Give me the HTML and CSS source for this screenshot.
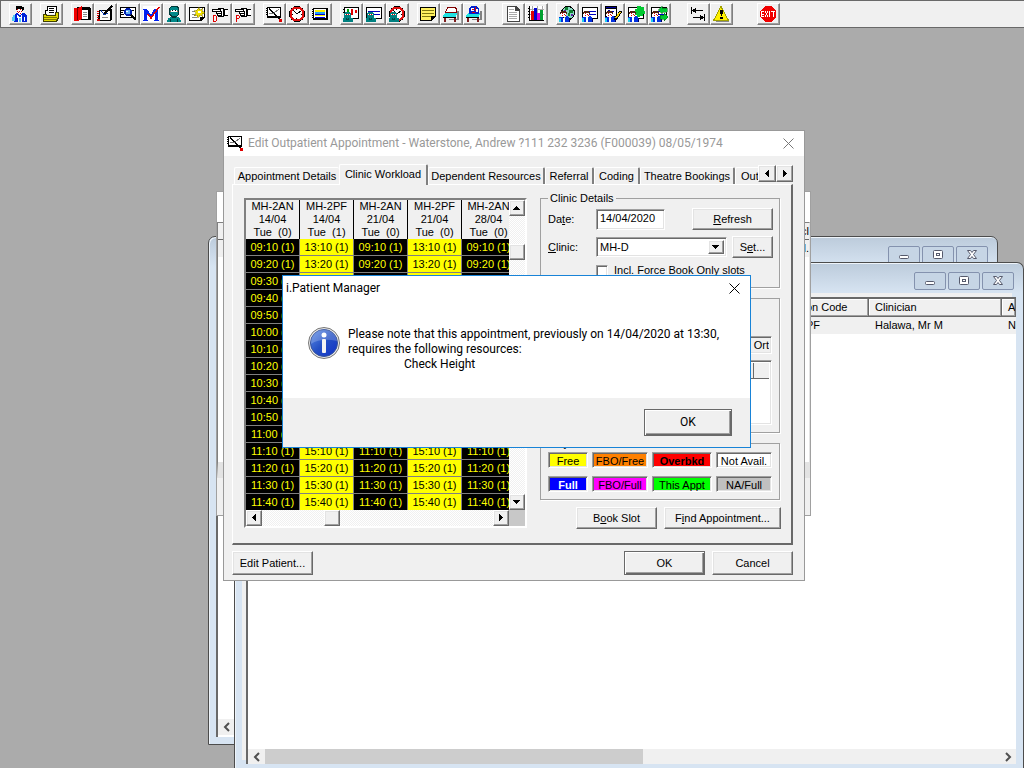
FILE: index.html
```html
<!DOCTYPE html>
<html lang="en">
<head>
    <meta charset="UTF-8">
    <meta name="viewport" content="width=device-width, initial-scale=1.0">
    <title>i.Patient Manager</title>
    <link rel="stylesheet" href="styles.css">
</head>
<body>
    <!-- shared arrow shapes -->
    <svg class="defs" width="0" height="0">
        <symbol id="left" viewBox="0 0 8 8"><path d="M5 0h1v7h-1zM4 1h1v5h-1zM3 2h1v3h-1zM2 3h1v1h-1z"/></symbol>
        <symbol id="right" viewBox="0 0 8 8"><path d="M2 0h1v7h-1zM3 1h1v5h-1zM4 2h1v3h-1zM5 3h1v1h-1z"/></symbol>
        <symbol id="up" viewBox="0 0 8 8"><path d="M0 5h7v1h-7zM1 4h5v1h-5zM2 3h3v1h-3zM3 2h1v1h-1z"/></symbol>
        <symbol id="down" viewBox="0 0 8 8"><path d="M0 2h7v1h-7zM1 3h5v1h-5zM2 4h3v1h-3zM3 5h1v1h-1z"/></symbol>
        <symbol id="appt" viewBox="0 0 16 16">
            <path fill="#000" d="M1 1h14v11h-14z"/><path fill="#fff" d="M2 2h12v8h-12z"/>
            <path fill="#000" d="M0 2h1v1h-1zM0 4h1v1h-1zM0 6h1v1h-1zM0 8h1v1h-1z"/>
            <path stroke="#000" stroke-width="1.5" fill="none" d="M3 3L14 13"/>
            <path stroke="#777" d="M3 8L8 7L13 3" fill="none"/>
            <path fill="#e00000" d="M13 13h3v3h-3z"/>
        </symbol>
        <symbol id="doctor" viewBox="0 0 16 16">
            <path fill="#502010" d="M2 5h5v1h1v2h-7v-2h1z"/><path fill="#fff" d="M2 7h5v4h-5z"/>
            <path fill="#e00000" d="M3 7h1v1h-1zM5 8h1v1h-1zM3 9h1v1h-1zM6 9h1v1h-1z"/>
            <path fill="#0030e0" d="M0 11h3l2 1 3-2 2 2v4h-10z"/><path fill="#20d0f0" d="M0 12h2v4h-2z"/><path fill="#fff" d="M4 12h2v4h-2z"/><path fill="#000060" d="M10 12h1v4h-1z"/>
        </symbol>
        <symbol id="surgeon" viewBox="0 0 16 16">
            <path fill="#008080" d="M2 6h5v1h1v5h2v4h-11v-4h2v-5h1z"/><path fill="#fff" d="M2 8h5v1h-5z"/><path fill="#e00000" d="M3 8h1v1h-1zM5 8h1v1h-1z"/><path fill="#004848" d="M3 12h1v1h1v-1h1v2h-3z"/>
        </symbol>
        <symbol id="clock" viewBox="0 0 16 16">
            <circle cx="8" cy="8" r="8" fill="#000"/><circle cx="8" cy="8" r="7.500" fill="#e01010"/><circle cx="8" cy="8" r="5.500" fill="#fff"/>
            <path fill="none" stroke="#000" d="M4 4L8 8L12 5"/><path fill="#000" d="M7 3h1v1h-1zM7 12h1v1h-1zM3 8h1v1h-1zM12 8h1v1h-1z"/>
        </symbol>
        <symbol id="hand" viewBox="0 0 16 16">
            <path fill="#000" d="M0 3h6v-1h6v1h4v7h-4v1h-6v-1h-1v-2h-1v-2h-4z"/><path fill="#fff" d="M1 4h7v1h-7zM5 6h4v1h-4zM6 8h3v1h-3zM9 3h2v2h-2zM10 5h1v5h-1zM13 4h3v5h-3z"/>
        </symbol>
        <symbol id="sheet" viewBox="0 0 16 16">
            <path fill="#000" d="M0 1h16v12h-16z"/><path fill="#fff" d="M1 2h14v10h-14z"/><path fill="#0000c0" d="M2 5h12v1h-12zM7 8h7v1h-7z"/>
        </symbol>
        <symbol id="couch" viewBox="0 0 16 16">
            <path fill="#808080" d="M14 5h2v9h-2zM6 13h10v1h-10z"/><path fill="#20e0e0" d="M2 7h12l-1 4h-13v-2z"/><path fill="#000" d="M0 11h13v1h-13z"/><path fill="#802020" d="M1 12h2v4h-2zM11 12h2v4h-2z"/>
        </symbol>
    </svg>

    <nav class="toolbar" aria-label="Toolbar">
        <div class="group">
            <button aria-label="Patient"><svg viewBox="0 0 16 16"><path fill="#000" d="M4 0h6v1h2v3h-1v1h-6v-1h-1z"/><path fill="#fff" d="M5 3h5v5h-5z"/><path fill="#e00000" d="M5 3h1v1h-1zM8 3h1v1h-1zM7 5h1v1h-1zM5 5h1v1h-1zM9 5h1v1h-1zM6 6h1v1h-1zM8 7h1v1h-1z"/><path fill="#0020d8" d="M2 9l3-2 3 3 2-3h2l3 3v6h-13z"/><path fill="#fff" d="M5 8l3 4 2-4v8h-4zM12 11h1v4h-1z"/><path fill="#50c8f8" d="M1 9h2v6h-3v-4h1zM7 12h2v4h-2z"/></svg></button>
        </div>
        <div class="group">
            <button aria-label="Open list"><svg viewBox="0 0 16 16"><path fill="#000" d="M4 0h10v8h-12v-4h2z"/><path fill="#fff" d="M5 1h8v7h-10v-3h2z"/><path fill="#000" d="M6 2h5v1h-5zM6 4h5v1h-5zM6 6h5v1h-5z"/><path fill="#e0d800" stroke="#404000" d="M.5 8.500h3v1h9v-3h3v5l-2 4h-13z"/><path fill="#807800" d="M1 11h13v1h-13zM1 13h13v1h-13z"/></svg></button>
        </div>
        <div class="group">
            <button aria-label="Record"><svg viewBox="0 0 16 16"><path fill="#000" d="M3 1h12l2 2v11h-14z"/><path fill="#fff" d="M8 4h6v9h-6z"/><path fill="#888" d="M9 6h4v1h-4zM9 8h4v1h-4zM9 10h4v1h-4z"/><path fill="#f00000" d="M0 2h4l4-2v13l-4 2h-4z"/><path fill="#700" d="M3 2h1v12h-1z"/></svg></button>
            <button aria-label="Edit record"><svg viewBox="0 0 16 16"><path fill="#000" d="M2 4h10v-1h3v11l-2 1h-12z"/><path fill="#fff" d="M3 5h10v9h-10z"/><path fill="#d00000" d="M0 5h2v1h-2zM0 7h2v1h-2zM0 9h2v1h-2zM0 11h2v1h-2zM0 13h3v2h-3z"/><path stroke="#000" stroke-width="1.5" d="M15 0L7 8"/><path stroke="#0030a0" d="M4 4L7 9L11 7" fill="none"/><path fill="#888" d="M5 11h6v1h-6z"/></svg></button>
            <button aria-label="Find record"><svg viewBox="0 0 16 16"><path fill="#000" d="M0 1h16v11h-16z"/><path fill="#fff" d="M1 2h14v9h-14z"/><path fill="#000" d="M1 4h3v1h-3zM1 6h2v1h-2zM1 8h3v1h-3zM12 4h2v1h-2z"/><circle cx="8" cy="6" r="4" fill="#0020b0"/><circle cx="8" cy="6" r="2.500" fill="#60b0f8"/><path fill="#fff" d="M6 5h2v1h-2z"/><path stroke="#000" stroke-width="2" d="M11 9L16 14"/></svg></button>
            <button aria-label="Mark"><svg viewBox="0 0 16 16"><path fill="#fff" d="M0 0h16v16h-16z"/><path fill="#0020f0" d="M0 3h4l4 6 3-6h4v11h1v1h-5v-1h1v-7l-4 5-4-5v7h1v1h-5v-1h1v-10h-1z"/><path fill="none" stroke="#e00000" stroke-width="1.500" d="M5 8L8 12L16 1"/></svg></button>
            <button aria-label="Theatre"><svg viewBox="0 0 16 16"><path fill="#003838" d="M5 0h6l2 2v6l-2 3h-6l-2-3v-6z"/><path fill="#008888" d="M5 1h6l1 2v5l-2 2h-4l-2-2v-5z"/><path fill="#fff" d="M5 4h6v2h-6z"/><path fill="#000" d="M6 4h1v1h-1zM9 4h1v1h-1z"/><path fill="#c06040" d="M4 5h1v1h-1zM11 5h1v1h-1z"/><path fill="#008888" d="M2 12l3-1h6l3 1 1 4h-14z"/><path fill="#003838" d="M4 13h1v3h-1zM11 13h1v3h-1zM6 11h4v1h-4z"/></svg></button>
            <button aria-label="New letter"><svg viewBox="0 0 16 16"><path fill="#000" d="M0 1h16v10l-4 4h-12z"/><path fill="#fff" d="M1 2h14v9h-4v3h-10z"/><path fill="#888" d="M3 5h3v1h-3zM3 8h3v1h-3zM3 11h5v1h-5z"/><path fill="#f0e000" stroke="#807000" stroke-width=".5" d="M10 1l1 3 3-2-1 3 3 2-3 1 1 3-3-2-2 3-1-3-3 1 2-3-2-2 3-1z"/><path fill="#fff" d="M9 5h3v2h-3z"/></svg></button>
            <button aria-label="Doctor pointer"><svg viewBox="0 0 16 16"><use href="#hand"/><path fill="none" stroke="#e00000" d="M1.500 9.500h2l1 1v4l-1 1h-2z"/></svg></button>
            <button aria-label="Patient pointer"><svg viewBox="0 0 16 16"><use href="#hand"/><path fill="none" stroke="#e00000" d="M1.500 16v-6.500h2l1 1v1l-1 1h-2"/></svg></button>
        </div>
        <div class="group">
            <button aria-label="Appointment"><svg viewBox="0 0 16 16"><use href="#appt"/></svg></button>
            <button aria-label="Time"><svg viewBox="0 0 16 16"><use href="#clock"/></svg></button>
            <button aria-label="Schedule"><svg viewBox="0 0 16 16"><path fill="#000" d="M1 2h15v12h-15z"/><path fill="#fff" d="M2 3h12v9h-12z"/><path fill="#f8f000" d="M3 4h10v2h-10zM3 9h10v1h-10z"/><path fill="#20a0ff" d="M3 6h10v2h-10z"/><path fill="#0000d0" d="M3 8h10v1h-10zM3 11h10v1h-10z"/><path fill="#000" d="M0 3h1v1h-1zM0 5h1v1h-1zM0 7h1v1h-1zM0 9h1v1h-1zM0 11h1v1h-1z"/></svg></button>
        </div>
        <div class="group">
            <button aria-label="Theatre list"><svg viewBox="0 0 16 16"><path fill="#000" d="M1 1h15v12h-15z"/><path fill="#fff" d="M2 2h13v10h-13z"/><path fill="#00a000" d="M4 3h2v3h-2z"/><path fill="#e00000" d="M8 3h2v6h-2zM12 4h2v3h-2z"/><path fill="#000" d="M0 3h1v1h-1zM0 6h1v1h-1z"/><use href="#surgeon"/></svg></button>
            <button aria-label="Theatre notes"><svg viewBox="0 0 16 16"><use href="#sheet"/><use href="#surgeon"/></svg></button>
            <button aria-label="Theatre time"><svg viewBox="0 0 16 16"><use href="#clock"/><use href="#surgeon"/></svg></button>
        </div>
        <div class="group">
            <button aria-label="Note"><svg viewBox="0 0 16 16"><path fill="#000" d="M0 1h16v9l-4 5h-12z"/><path fill="#fff060" d="M1 2h14v8h-4v4h-10z"/><path fill="#807810" d="M2 4h12v1h-12zM2 7h12v1h-12zM2 10h9v1h-9z"/></svg></button>
            <button aria-label="Bed"><svg viewBox="0 0 16 16"><use href="#couch"/><path fill="#fff" stroke="#800000" d="M4.500 1.500h8l1 2v3h-11z"/></svg></button>
            <button aria-label="Bed patient"><svg viewBox="0 0 16 16"><use href="#couch"/><path fill="#0020d0" d="M5 0h5l3 3v5h-10v-5z"/><path fill="#fff" d="M5 2h3v3h-3zM10 3h2v3h-2z"/><path fill="#e00000" d="M6 3h2v1h-2zM9 1h1v4h-1zM6 6h3v1h-3z"/></svg></button>
        </div>
        <div class="group wide">
            <button aria-label="Document"><svg viewBox="0 0 16 16"><path fill="#444" d="M2 0h9l4 4v12h-13z"/><path fill="#fff" d="M3 1h7v4h4v10h-11z"/><path fill="#aaa" d="M4 3h5v1h-5zM4 6h8v1h-8zM4 8h8v1h-8zM4 10h8v1h-8zM4 12h8v1h-8z"/></svg></button>
            <button aria-label="Chart"><svg viewBox="0 0 16 16"><path fill="#fff" d="M1 0h15v15h-15z"/><path fill="#aaa" d="M4 0h1v15h-1zM9 0h1v15h-1zM14 0h1v15h-1zM1 3h15v1h-15zM1 8h15v1h-15z"/><path fill="#000" d="M1 0h1v14h14v1h-15zM0 2h1v1h-1zM0 5h1v1h-1zM0 8h1v1h-1zM0 11h1v1h-1z"/><path fill="#e00000" d="M3 5h3v9h-3z"/><path fill="#0000d0" d="M6 2h3v12h-3z"/><path fill="#d000d0" d="M9 7h3v7h-3z"/><path fill="#00a030" d="M12 4h3v10h-3z"/></svg></button>
        </div>
        <div class="group">
            <button aria-label="Global patient"><svg viewBox="0 0 16 16"><circle cx="9" cy="7" r="7" fill="#000"/><circle cx="9" cy="7" r="6" fill="#88d8c0"/><path fill="#108030" d="M6 1h3v3h-3zM10 4h4v3h-3v3h-2v-3h1z"/><path fill="#6020a0" d="M5 4h2v2h-2zM12 8h2v2h-2z"/><use href="#doctor"/></svg></button>
            <button aria-label="Patient sheet"><svg viewBox="0 0 16 16"><use href="#sheet"/><use href="#doctor"/></svg></button>
            <button aria-label="Edit patient sheet"><svg viewBox="0 0 16 16"><path fill="#000" d="M0 0h12v11h-12z"/><path fill="#fff" d="M1 3h10v7h-10z"/><path fill="#0000a0" d="M1 1h10v1h-10zM3 4h2v1h-2zM7 5h2v1h-2z"/><use href="#doctor"/><path stroke="#000" stroke-width="3" d="M16 5L10 14"/><path stroke="#f0d000" stroke-width="1.500" d="M15 6L11 12"/></svg></button>
            <button aria-label="Patient location"><svg viewBox="0 0 16 16"><use href="#sheet"/><path fill="#00c830" d="M9 0h4v1h3v4h1v3h-2v2h-3v1h-3v-2h-2v-6h2z"/><use href="#doctor"/></svg></button>
            <button aria-label="Transfer patient"><svg viewBox="0 0 16 16"><use href="#sheet"/><use href="#doctor"/><path fill="#00c830" stroke="#006010" stroke-width=".5" d="M7 4l4-4v2h5v4h-5v2zM17 11l-4-4v2h-4v4h4v2z"/></svg></button>
        </div>
        <div class="group wide">
            <button aria-label="Tab order"><svg viewBox="0 0 16 16"><path fill="#000" d="M1 1h1v7h-1zM2 4h11v1h-11zM3 3h2v3h-2zM5 2h1v5h-1zM14 8h1v7h-1zM3 11h11v1h-11zM11 10h2v3h-2zM10 9h1v5h-1z"/></svg></button>
            <button aria-label="Alert"><svg viewBox="0 0 16 16"><path fill="#fff000" stroke="#a0a000" d="M8 .5L15.500 14.500H.5z"/><path fill="#888" d="M3 15h13v1h-13z"/><path fill="#000" d="M7 4h3v4h-1v2h-1v-2h-1zM7 11h3v2h-3z"/></svg></button>
        </div>
        <div class="group last">
            <button aria-label="Exit"><svg viewBox="0 0 16 16"><path fill="#f00000" d="M5 0h6l5 5v6l-5 5h-6l-5-5v-6z"/><path fill="#fff" d="M1 5h3v1h-2v2h2v1h-2v1h2v1h-3zM5 5h1v2h1v-2h1v2h-1v2h1v2h-1v-2h-1v2h-1v-2h1v-2h-1zM9 5h1v6h-1zM11 5h4v1h-1v5h-1v-5h-2z"/></svg></button>
        </div>
    </nav>

    <main class="desktop">
        <!-- back MDI window -->
        <section class="mdi mdi-back">
            <div class="mdi-title">
                <button aria-label="Minimise"><svg viewBox="0 0 12 10"><rect x="1.500" y="5.500" width="9" height="3" rx="1"/></svg></button>
                <button aria-label="Restore"><svg viewBox="0 0 12 10"><rect x="1.500" y=".5" width="9" height="8" rx="1"/><rect x="4.500" y="3.500" width="3" height="2"/></svg></button>
                <button aria-label="Close"><svg viewBox="0 0 12 10"><path d="M1.500 .5h3l1.500 2 1.500-2h3L7.500 4.500l3 4h-3L6 6.500l-1.500 2h-3l3-4z"/></svg></button>
            </div>
            <div class="mdi-body">
                <div class="hscroll"><button class="flat" aria-label="Scroll left"><svg viewBox="0 0 8 10"><path d="M6 1L2 5l4 4"/></svg></button></div>
            </div>
        </section>

        <!-- front MDI window -->
        <section class="mdi mdi-front">
            <div class="mdi-title">
                <button aria-label="Minimise"><svg viewBox="0 0 12 10"><rect x="1.500" y="5.500" width="9" height="3" rx="1"/></svg></button>
                <button aria-label="Restore"><svg viewBox="0 0 12 10"><rect x="1.500" y=".5" width="9" height="8" rx="1"/><rect x="4.500" y="3.500" width="3" height="2"/></svg></button>
                <button aria-label="Close"><svg viewBox="0 0 12 10"><path d="M1.500 .5h3l1.500 2 1.500-2h3L7.500 4.500l3 4h-3L6 6.500l-1.500 2h-3l3-4z"/></svg></button>
            </div>
            <div class="mdi-body">
                <table class="list">
                    <colgroup><col class="c-first"><col class="c-code"><col class="c-clinician"><col></colgroup>
                    <thead><tr><th></th><th>Session Code</th><th>Clinician</th><th>A</th></tr></thead>
                    <tbody><tr><td></td><td>MH-2PF</td><td>Halawa, Mr M</td><td>N</td></tr></tbody>
                </table>
                <div class="hscroll">
                    <button class="flat" aria-label="Scroll left"><svg viewBox="0 0 8 10"><path d="M6 1L2 5l4 4"/></svg></button>
                    <span class="flat-thumb"></span>
                    <button class="flat" aria-label="Scroll right"><svg viewBox="0 0 8 10"><path d="M2 1l4 4-4 4"/></svg></button>
                </div>
            </div>
        </section>

        <section class="browser">
            <div class="browser-list">
                <div class="browser-head">cl</div>
                <div class="browser-row">l.</div>
            </div>
            <div class="browser-foot"></div>
        </section>

        <!-- appointment dialog -->
        <section class="dialog">
            <header class="dialog-title">
                <svg viewBox="0 0 16 16"><use href="#appt"/></svg>
                <h1>Edit Outpatient Appointment - Waterstone, Andrew ?111 232 3236 (F000039) 08/05/1974</h1>
                <button class="close" aria-label="Close"><svg viewBox="0 0 11 11"><path d="M.5 .5l10 10M10.500 .5l-10 10"/></svg></button>
            </header>
            <div class="dialog-body">
                <div class="tabs">
                    <button class="tab t-details">Appointment Details</button>
                    <button class="tab t-workload active">Clinic Workload</button>
                    <button class="tab t-resources">Dependent Resources</button>
                    <button class="tab t-referral">Referral</button>
                    <button class="tab t-coding">Coding</button>
                    <button class="tab t-theatre">Theatre Bookings</button>
                    <button class="tab t-out">Out</button>
                    <div class="spin">
                        <button class="raised" aria-label="Previous tabs"><svg class="arrow"><use href="#left"/></svg></button>
                        <button class="raised" aria-label="Next tabs"><svg class="arrow"><use href="#right"/></svg></button>
                    </div>
                </div>
                <div class="panel">
                    <div class="workload">
                        <div class="slots">
                            <table>
                                <thead>
                                    <tr>
                                        <th>MH-2AN<br>14/04<br>Tue&nbsp; (0)</th>
                                        <th>MH-2PF<br>14/04<br>Tue&nbsp; (1)</th>
                                        <th>MH-2AN<br>21/04<br>Tue&nbsp; (0)</th>
                                        <th>MH-2PF<br>21/04<br>Tue&nbsp; (0)</th>
                                        <th>MH-2AN<br>28/04<br>Tue&nbsp; (0)</th>
                                    </tr>
                                </thead>
                                <tbody id="slotRows"></tbody>
                            </table>
                        </div>
                        <div class="track vertical">
                            <button class="raised" aria-label="Scroll up"><svg class="arrow"><use href="#up"/></svg></button>
                            <span class="raised thumb"></span>
                            <button class="raised end" aria-label="Scroll down"><svg class="arrow"><use href="#down"/></svg></button>
                        </div>
                        <div class="track horizontal">
                            <button class="raised" aria-label="Scroll left"><svg class="arrow"><use href="#left"/></svg></button>
                            <span class="raised thumb"></span>
                            <button class="raised end" aria-label="Scroll right"><svg class="arrow"><use href="#right"/></svg></button>
                        </div>
                        <div class="corner"></div>
                    </div>

                    <div class="side">
                        <fieldset class="details">
                            <legend>Clinic Details</legend>
                            <div class="row">
                                <label for="date">Da<u>t</u>e:</label>
                                <input type="text" id="date" class="sunken" value="14/04/2020">
                                <button class="raised btn refresh"><u>R</u>efresh</button>
                            </div>
                            <div class="row">
                                <label for="clinic"><u>C</u>linic:</label>
                                <div class="combo sunken">
                                    <select id="clinic"><option>MH-D</option></select>
                                    <span class="raised drop"><svg class="arrow"><use href="#down"/></svg></span>
                                </div>
                                <button class="raised btn set">S<u>e</u>t...</button>
                            </div>
                            <div class="row check">
                                <input type="checkbox" id="force" class="sunken">
                                <label for="force">Incl. Force Book Only slots</label>
                            </div>
                        </fieldset>
                        <fieldset class="session">
                            <input type="text" class="sunken" value=", Ort" aria-label="Specialty" readonly>
                            <div class="sunken minilist"><div><span></span><span></span></div></div>
                        </fieldset>
                        <fieldset class="key">
                            <legend>Key</legend>
                            <div class="keys">
                                <span class="sunken k-free">Free</span>
                                <span class="sunken k-fbo">FBO/Free</span>
                                <span class="sunken k-over">Overbkd</span>
                                <span class="sunken k-not">Not Avail.</span>
                                <span class="sunken k-full">Full</span>
                                <span class="sunken k-fbofull">FBO/Full</span>
                                <span class="sunken k-this">This Appt</span>
                                <span class="sunken k-na">NA/Full</span>
                            </div>
                        </fieldset>
                        <div class="actions">
                            <button class="raised btn">B<u>o</u>ok Slot</button>
                            <button class="raised btn find">F<u>i</u>nd Appointment...</button>
                        </div>
                    </div>
                </div>
                <footer class="dialog-foot">
                    <button class="raised btn">Edit Patient...</button>
                    <button class="raised btn default">OK</button>
                    <button class="raised btn">Cancel</button>
                </footer>
            </div>
        </section>

        <!-- message box -->
        <section class="message" role="alertdialog">
            <header class="message-title">
                <h2>i.Patient Manager</h2>
                <button class="close" aria-label="Close"><svg viewBox="0 0 11 11"><path d="M.5 .5l10 10M10.500 .5l-10 10"/></svg></button>
            </header>
            <div class="message-body">
                <svg class="info" viewBox="0 0 32 32">
                    <defs><linearGradient id="blue" x1="0" y1="0" x2="1" y2="1"><stop offset="0" stop-color="#5f8fe8"/><stop offset=".5" stop-color="#2450c4"/><stop offset="1" stop-color="#1030c8"/></linearGradient></defs>
                    <circle cx="16" cy="16" r="15.500" fill="#e8e8e8" stroke="#777"/>
                    <circle cx="16" cy="16" r="13.500" fill="url(#blue)" stroke="#34529c"/>
                    <path fill="#fff" fill-opacity=".2" d="M3 17a13 13 0 0 1 26-3C20 12 10 12 3 17z"/>
                    <circle cx="16" cy="8" r="2.500" fill="#fff"/><rect x="14" y="12" width="4" height="14" rx="1" fill="#f4f4f4"/>
                </svg>
                <div class="text">
                    <p>Please note that this appointment, previously on 14/04/2020 at 13:30,</p>
                    <p>requires the following resources:</p>
                    <p class="item">Check Height</p>
                </div>
            </div>
            <footer class="message-foot"><button class="raised btn default">OK</button></footer>
        </section>
    </main>

    <script>
    // one row for each ten minute slot, AN clinics in the morning, PF in the afternoon
    var rows = '';
    for (var i = 1; i <= 16; i++) {
        var hour = Math.floor(i / 6);
        var min = (i % 6) + '0';
        var an = ('0' + (9 + hour)).slice(-2) + ':' + min + ' (1)';
        var pf = (13 + hour) + ':' + min + ' (1)';
        rows += '<tr>';
        for (var c = 0; c < 5; c++) {
            rows += c % 2 ? '<td class="pf">' + pf + '</td>' : '<td>' + an + '</td>';
        }
        rows += '</tr>';
    }
    document.getElementById('slotRows').innerHTML = rows;
    </script>
</body>
</html>
```

FILE: styles.css
```css
* {
    box-sizing: border-box;
}

body {
    margin: 0;
    height: 100vh;
    display: flex;
    flex-direction: column;
    overflow: hidden;
    background-color: #ababab;
    color: #000;
    font-family: "Liberation Sans", Arial, sans-serif;
    font-size: 11px;
    line-height: 13px;
}

button, input, select {
    font: inherit;
    color: inherit;
    margin: 0;
    padding: 0;
    border-radius: 0;
}

button {
    border: 0;
    background: none;
    white-space: nowrap;
}

h1, h2, p {
    margin: 0;
    font-size: 12px;
    font-weight: normal;
}

.defs {
    position: absolute;
}

/* 3D edges */
.raised {
    background-color: #f0f0f0;
    border: 1px solid;
    border-color: #fff #696969 #696969 #fff;
    box-shadow: inset -1px -1px 0 #a0a0a0, inset 1px 1px 0 #e3e3e3;
}

.sunken {
    border: 1px solid;
    border-color: #a0a0a0 #fff #fff #a0a0a0;
    box-shadow: inset 1px 1px 0 #696969, inset -1px -1px 0 #e3e3e3;
}

.btn {
    height: 22px;
    width: 81px;
}

.btn.default {
    border-color: #696969;
    box-shadow: inset 1px 1px 0 #fff, inset -1px -1px 0 #696969, inset -2px -2px 0 #a0a0a0;
}

.arrow {
    display: block;
    width: 8px;
    height: 8px;
    margin: auto;
    shape-rendering: crispEdges;
}

/* toolbar */
.toolbar {
    display: flex;
    gap: 8px;
    height: 28px;
    padding: 2px 8px;
    background-color: #f0f0f0;
    border: 1px solid #696969;
    border-width: 1px 0 1px 1px;
}

.group {
    display: flex;
}

.group.wide {
    margin-left: 8px;
}

.group.last {
    margin-left: 16px;
}

.toolbar button {
    width: 23px;
    height: 22px;
    padding: 2px;
    background-color: #f0f0f0;
    border: 1px solid;
    border-color: #fff #808080 #808080 #fff;
    box-shadow: inset -1px -1px 0 #a0a0a0;
}

.toolbar svg {
    display: block;
    width: 16px;
    height: 16px;
    overflow: visible;
    shape-rendering: crispEdges;
}

.desktop {
    position: relative;
    flex: 1;
    overflow: hidden;
}

/* MDI child windows */
.mdi {
    position: absolute;
    display: flex;
    flex-direction: column;
    padding: 0 7px 7px;
    background: #d7e4f2 linear-gradient(#bccbdb, #d7e4f2) no-repeat 0 0 / 100% 30px;
    border: 1px solid #4c4c4c;
    border-radius: 7px 7px 0 0;
    box-shadow: inset 1px 1px 0 #eef4fa;
}

.mdi-back {
    left: 208px;
    top: 208px;
    width: 790px;
    height: 509px;
}

.mdi-front {
    left: 234px;
    right: 0;
    top: 234px;
    bottom: 0;
    padding-bottom: 4px;
    border-bottom: 0;
}

.mdi-title {
    display: flex;
    justify-content: flex-end;
    gap: 2px;
    height: 30px;
    padding: 9px 2px 0 0;
}

.mdi-title button {
    width: 32px;
    height: 18px;
    border: 1px solid #8492ae;
    border-radius: 2px;
    background-color: #c6d5e5;
}

.mdi-title svg {
    display: block;
    width: 12px;
    height: 10px;
    margin: auto;
    fill: #fff;
    stroke: #565a6c;
}

.mdi-body {
    flex: 1;
    display: flex;
    flex-direction: column;
    justify-content: space-between;
    background-color: #fff;
    border-left: 2px solid #696969;
}

.mdi-back .mdi-body {
    justify-content: flex-end;
    padding-bottom: 2px;
}

.mdi-front .mdi-body {
    border-top: 2px solid #696969;
    margin-top: 4px;
    margin-left: 4px;
    box-shadow: -4px -4px 0 #f0f0f0;
}

.list {
    width: 100%;
    table-layout: fixed;
    border-collapse: separate;
    border-spacing: 0;
    white-space: nowrap;
    background-color: #f0f0f0;
}

.c-first {
    width: 525px;
}

.c-code {
    width: 96px;
}

.c-clinician {
    width: 133px;
}

.list th, .list td {
    height: 17px;
    padding: 0 0 0 6px;
    font-weight: normal;
    text-align: left;
    overflow: hidden;
}

.list th {
    height: 18px;
    border-right: 1px solid #696969;
    border-bottom: 1px solid #696969;
    box-shadow: inset -1px -1px 0 #a0a0a0, inset 1px 1px 0 #fff;
}

.hscroll {
    display: flex;
    height: 16px;
    background-color: #f0f0f0;
}

.mdi-front .hscroll {
    height: 15px;
}

.flat {
    width: 17px;
}

.flat:last-child:not(:first-child) {
    margin-left: auto;
}

.flat svg {
    display: block;
    width: 8px;
    height: 10px;
    margin: auto;
    fill: none;
    stroke: #505050;
    stroke-width: 2;
}

.flat-thumb {
    width: 378px;
    background-color: #cdcdcd;
}

/* window behind the dialog */
.browser {
    position: absolute;
    left: 216px;
    top: 163px;
    width: 595px;
    height: 325px;
    display: flex;
    flex-direction: column;
    background-color: #fff;
    border: 1px solid #a0a0a0;
    padding-top: 30px;
}

.browser-list {
    flex: 1;
    border: 1px solid #808080;
    border-bottom: 16px solid #e3e3e3;
    border-right-color: #e3e3e3;
    text-align: right;
}

.browser-head, .browser-row {
    height: 17px;
    line-height: 17px;
    background-color: #f0f0f0;
}

.browser-head {
    border-bottom: 1px solid #696969;
}

.browser-foot {
    height: 37px;
    background-color: #f0f0f0;
}

/* appointment dialog */
.dialog {
    position: absolute;
    left: 223px;
    top: 102px;
    width: 582px;
    background-color: #f0f0f0;
    border: 1px solid #999;
}

.dialog-title {
    display: flex;
    align-items: center;
    height: 25px;
    padding: 0 10px 1px 3px;
    background-color: #fff;
}

.dialog-title > svg {
    width: 16px;
    height: 16px;
    margin-right: 5px;
    shape-rendering: crispEdges;
}

.dialog-title h1 {
    flex: 1;
    color: #999;
    font-family: Roboto, "Open Sans", sans-serif;
    white-space: nowrap;
}

.close svg {
    display: block;
    width: 11px;
    height: 11px;
    fill: none;
    stroke: #000;
}

.dialog .close svg {
    stroke: #777;
}

.dialog-body {
    padding: 8px 11px 5px 8px;
}

.tabs {
    position: relative;
    display: flex;
    align-items: flex-end;
    height: 20px;
    padding-left: 2px;
}

.tab {
    height: 17px;
    border: 1px solid #fff;
    border-right: 2px solid #808080;
    border-bottom: 0;
    border-radius: 2px 2px 0 0;
    background-color: #f0f0f0;
}

.tab.active {
    height: 21px;
    padding-bottom: 1px;
    margin-bottom: -1px;
    z-index: 1;
}

.t-details {
    width: 105px;
    border-right-width: 0;
}

.t-workload {
    width: 89px;
}

.t-resources {
    width: 117px;
}

.t-referral {
    width: 49px;
}

.t-coding {
    width: 46px;
}

.t-theatre {
    width: 95px;
}

.t-out {
    flex: 1;
    padding-left: 5px;
    text-align: left;
    border-right: 0;
}

.spin {
    position: absolute;
    right: 0;
    top: 1px;
    display: flex;
    height: 17px;
}

.spin .raised {
    width: 17px;
}

.spin .raised:first-child {
    width: 18px;
}

.panel {
    display: flex;
    justify-content: space-between;
    padding: 7px 10px 14px 11px;
    border: 1px solid #fff;
    border-right: 2px solid #696969;
    border-bottom: 2px solid #696969;
}

.workload {
    display: grid;
    grid-template-columns: 263px 16px;
    grid-template-rows: 310px 16px;
    align-self: flex-start;
    margin-top: 6px;
    border: 2px solid;
    border-color: #808080 #fff #fff #808080;
}

.slots {
    overflow: hidden;
}

.slots table {
    width: 270px;
    table-layout: fixed;
    border-collapse: separate;
    border-spacing: 0;
    text-align: center;
}

.slots th {
    height: 38px;
    padding: 0;
    border-right: 1px solid #000;
    font-weight: normal;
}

.slots td {
    height: 17px;
    padding: 0;
    border-right: 1px solid #808080;
    border-bottom: 1px solid #808080;
    background-color: #000;
    color: #ff0;
    line-height: 15px;
}

.slots td.pf {
    background-color: #ff0;
    color: #000;
}

.track {
    display: flex;
    background: repeating-conic-gradient(#fff 0 25%, #f0f0f0 0 50%) 0 0 / 2px 2px;
}

.track .raised {
    width: 16px;
    height: 16px;
}

.vertical {
    flex-direction: column;
}

.vertical .thumb {
    margin-top: 28px;
}

.vertical .end {
    margin-top: auto;
}

.horizontal .thumb {
    margin-left: 62px;
}

.horizontal .end {
    margin-left: auto;
}

.corner {
    background-color: #c8c8c8;
}

.side {
    width: 241px;
}

fieldset {
    min-width: 0;
    margin: 0 1px 0 0;
    padding: 0 7px;
    border: 1px solid #a0a0a0;
    box-shadow: 1px 1px 0 #fff;
}

legend {
    padding: 0 2px;
}

.details {
    height: 96px;
    padding-top: 3px;
    padding-right: 6px;
}

.row {
    display: flex;
    align-items: center;
    margin-bottom: 6px;
}

.row > label {
    width: 48px;
}

.row > .btn {
    margin-left: auto;
}

#date {
    width: 69px;
    height: 21px;
    padding: 0 3px 2px;
}

.combo {
    display: flex;
    width: 131px;
    height: 20px;
    padding: 2px;
    background-color: #fff;
}

.combo select {
    flex: 1;
    border: 0;
    appearance: none;
    background-color: #fff;
    padding-left: 1px;
}

.drop {
    display: flex;
    width: 16px;
    margin-left: -16px;
    pointer-events: none;
}

.btn.set {
    width: 41px;
}

.row.check {
    padding-left: 48px;
}

.check input {
    appearance: none;
    width: 12px;
    height: 12px;
    margin-right: 6px;
    background-color: #fff;
}

.check label {
    width: auto;
}

.session {
    height: 135px;
    margin-top: 10px;
    padding: 37px 7px 7px;
}

.session input {
    display: block;
    width: 100%;
    height: 18px;
    padding-right: 2px;
    background-color: #f0f0f0;
    text-align: right;
}

.minilist {
    height: 65px;
    margin-top: 6px;
    padding: 2px;
    background-color: #fff;
}

.minilist div {
    display: flex;
    justify-content: flex-end;
    height: 16px;
    background-color: #f0f0f0;
    border-bottom: 1px solid #696969;
}

.minilist span {
    width: 16px;
    border-left: 1px solid #696969;
}

.minilist span:first-child {
    border: 0;
}

.key {
    margin-top: 4px;
    padding: 2px 7px 7px;
}

.keys {
    display: grid;
    grid-template-columns: 40px 56px 60px 56px;
    gap: 8px 4px;
}

.keys span {
    height: 16px;
    line-height: 16px;
    text-align: center;
    white-space: nowrap;
}

.k-free {
    background-color: #ff0;
}

.k-fbo {
    background-color: #ff8000;
}

.k-over {
    background-color: #f00;
    font-weight: bold;
}

.k-not {
    background-color: #fff;
}

.k-full {
    background-color: #00f;
    color: #fff;
    font-weight: bold;
}

.k-fbofull {
    background-color: #f0f;
}

.k-this {
    background-color: #0f0;
}

.k-na {
    background-color: #c0c0c0;
}

.actions {
    display: flex;
    justify-content: flex-end;
    gap: 7px;
    margin-top: 7px;
}

.find {
    width: 117px;
}

.dialog-foot {
    display: flex;
    gap: 7px;
    margin-top: 6px;
}

.dialog-foot .btn {
    height: 24px;
}

.dialog-foot .btn:first-child {
    margin-right: auto;
}

/* message box */
.message {
    position: absolute;
    left: 282px;
    top: 247px;
    width: 469px;
    background-color: #fff;
    border: 1px solid #1883d7;
    font-family: Roboto, "Open Sans", sans-serif;
    font-size: 12px;
    line-height: 15px;
}

.message-title {
    display: flex;
    justify-content: space-between;
    align-items: center;
    height: 24px;
    padding: 0 10px 0 3px;
}

.message-body {
    display: flex;
    gap: 8px;
    height: 98px;
    padding: 27px 25px 0;
}

.info {
    flex: none;
    width: 32px;
    height: 32px;
}

.text {
    white-space: nowrap;
}

.item {
    padding-left: 56px;
}

.message-foot {
    display: flex;
    justify-content: flex-end;
    padding: 11px 18px;
    background-color: #f0f0f0;
}

.message-foot .btn {
    width: 88px;
    height: 27px;
}
```
